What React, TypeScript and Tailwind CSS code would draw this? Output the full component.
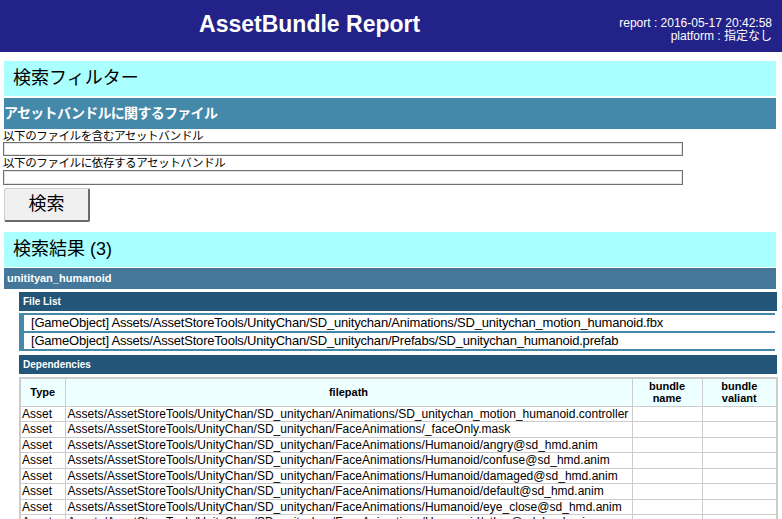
import React from "react";

const SANS = "font-['Liberation_Sans','Noto_Sans_CJK_JP',sans-serif]";

const fileList = [
  "[GameObject] Assets/AssetStoreTools/UnityChan/SD_unitychan/Animations/SD_unitychan_motion_humanoid.fbx",
  "[GameObject] Assets/AssetStoreTools/UnityChan/SD_unitychan/Prefabs/SD_unitychan_humanoid.prefab",
];

const deps = [
  "Assets/AssetStoreTools/UnityChan/SD_unitychan/Animations/SD_unitychan_motion_humanoid.controller",
  "Assets/AssetStoreTools/UnityChan/SD_unitychan/FaceAnimations/_faceOnly.mask",
  "Assets/AssetStoreTools/UnityChan/SD_unitychan/FaceAnimations/Humanoid/angry@sd_hmd.anim",
  "Assets/AssetStoreTools/UnityChan/SD_unitychan/FaceAnimations/Humanoid/confuse@sd_hmd.anim",
  "Assets/AssetStoreTools/UnityChan/SD_unitychan/FaceAnimations/Humanoid/damaged@sd_hmd.anim",
  "Assets/AssetStoreTools/UnityChan/SD_unitychan/FaceAnimations/Humanoid/default@sd_hmd.anim",
  "Assets/AssetStoreTools/UnityChan/SD_unitychan/FaceAnimations/Humanoid/eye_close@sd_hmd.anim",
  "Assets/AssetStoreTools/UnityChan/SD_unitychan/FaceAnimations/Humanoid/other@sd_hmd.anim",
  "Assets/AssetStoreTools/UnityChan/SD_unitychan/FaceAnimations/Humanoid/smile@sd_hmd.anim",
];

export default function App() {
  return (
    <div className={`${SANS} w-[782px] bg-white text-black`}>
      {/* Header */}
      <div className="flex h-[52px] bg-[#222288] text-white">
        <div className="flex flex-1 items-center justify-center pb-[4px] text-[23px] font-bold">
          AssetBundle Report
        </div>
        <div className="mt-[17px] pr-[10px] text-right text-[12px] leading-[13px]">
          <div>report : 2016-05-17 20:42:58</div>
          <div>platform : 指定なし</div>
        </div>
      </div>

      <div className="ml-[4px] w-[772px]">
        {/* Filter */}
        <div className="mt-[9px] flex h-[35px] items-center bg-[#aaffff] pl-[9px] text-[18px]">
          検索フィルター
        </div>
        <div className="mt-[2px] flex h-[31px] items-center bg-[#4488aa] text-[14px] font-bold text-white tracking-[-0.7px]">
          アセットバンドルに関するファイル
        </div>
        <div className="-ml-[1px]">
          <div className="h-[13px] text-[11.5px] leading-[14px] tracking-[-0.4px]">以下のファイルを含むアセットバンドル</div>
          <input className="block h-[14px] w-[680px] border border-[#707070] bg-white shadow-[inset_0_0_0_1px_#e3e3e3] outline-none" />
          <div className="h-[14px] text-[11.5px] leading-[14px] tracking-[-0.4px]">以下のファイルに依存するアセットバンドル</div>
          <input className="block h-[15px] w-[680px] border border-[#707070] bg-white shadow-[inset_0_0_0_1px_#e3e3e3] outline-none" />
        </div>
        <button className="mt-[3px] flex h-[34px] w-[86px] items-center justify-center rounded-[2px] border border-[#cfcfcf] border-b-2 border-r-2 border-b-[#6a6a6a] border-r-[#6a6a6a] bg-[#f0f0f0] text-[18px]">
          検索
        </button>

        {/* Results */}
        <div className="mt-[10px] flex h-[35px] items-center bg-[#aaffff] pl-[9px] text-[18px]">
          検索結果 (3)
        </div>
        <div className="mt-[1px] flex h-[21px] items-center bg-[#447799] pl-[3px] text-[11px] font-bold text-white">
          unitityan_humanoid
        </div>

        <div className="ml-[15px] w-[758px]">
          <div className="mt-[3px] flex h-[19px] items-center bg-[#225577] pl-[4px] text-[10px] font-bold text-white">
            File List
          </div>
          <div className="mt-[2px] flex w-[756px] flex-col gap-[2px] bg-[#4488aa] py-[2px] pl-[5px]">
            {fileList.map((f) => (
              <div key={f} className="flex h-[16px] items-center bg-white pl-[7px] text-[13px] tracking-[-0.2px]">
                {f}
              </div>
            ))}
          </div>
          <div className="mt-[4px] flex h-[19px] items-center bg-[#225577] pl-[4px] text-[10px] font-bold text-white">
            Dependencies
          </div>
          <table className="mt-[3px] w-[757px] table-fixed border-collapse border-2 border-[#cccccc] text-[12px]">
            <colgroup>
              <col className="w-[45px]" />
              <col className="w-[567px]" />
              <col className="w-[70px]" />
              <col className="w-[75px]" />
            </colgroup>
            <thead>
              <tr className="h-[28px] bg-[#eeffff] text-[11px] font-bold leading-[12px]">
                <th className="border border-[#cccccc]">Type</th>
                <th className="border border-[#cccccc]">filepath</th>
                <th className="border border-[#cccccc]">bundle<br />name</th>
                <th className="border border-[#cccccc]">bundle<br />valiant</th>
              </tr>
            </thead>
            <tbody>
              {deps.map((d) => (
                <tr key={d} className="h-[15.5px] leading-[14px]">
                  <td className="border border-[#cccccc] px-[1px]">Asset</td>
                  <td className="overflow-hidden whitespace-nowrap border border-[#cccccc] px-[2px] tracking-[0.02px]">{d}</td>
                  <td className="border border-[#cccccc]"></td>
                  <td className="border border-[#cccccc]"></td>
                </tr>
              ))}
            </tbody>
          </table>
        </div>
      </div>
    </div>
  );
}
